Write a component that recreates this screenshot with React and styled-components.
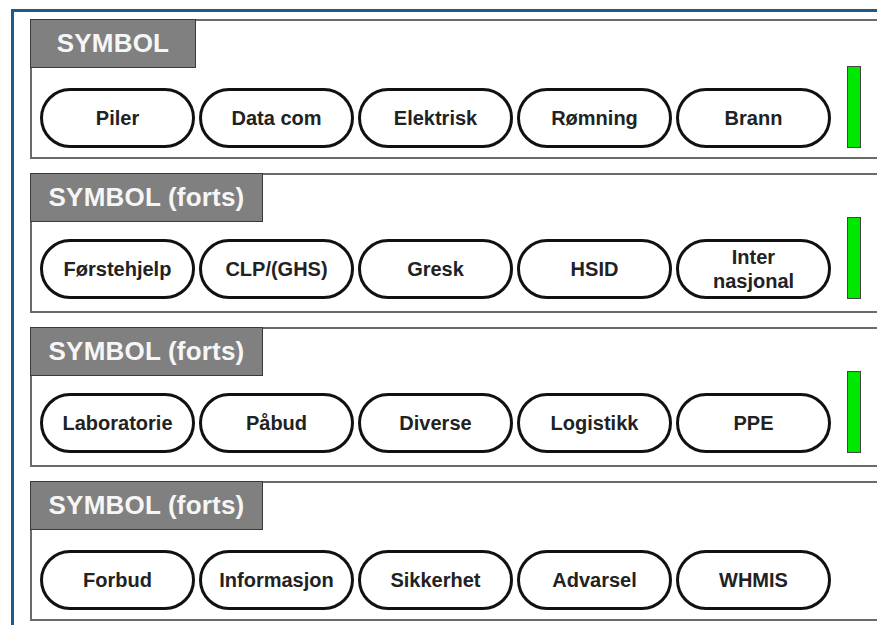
import React from "react";
import styled, { createGlobalStyle } from "styled-components";

const Global = createGlobalStyle`
  html, body { margin: 0; padding: 0; background: #fff; overflow: hidden; }
  body { font-family: "Liberation Sans", Arial, sans-serif; }
`;

const Frame = styled.div`
  margin: 9px 0 0 11px;
  width: calc(100vw - 11px);
  height: calc(100vh - 9px);
  border-left: 3px solid #1e5a8a;
  border-top: 3px solid #1e5a8a;
  padding: 7px 0 0 16px;
  display: flex;
  flex-direction: column;
  gap: 14px;
  box-sizing: border-box;
  overflow: hidden;
`;

const Panel = styled.section`
  box-sizing: border-box;
  width: 100%;
  height: 140px;
  flex: none;
  border: 2px solid #6a6a6a;
  border-right: none;
  display: flex;
  flex-direction: column;
  align-items: flex-start;
`;

const Tab = styled.div`
  box-sizing: border-box;
  margin: -2px 0 0 -2px;
  width: ${(p) => p.$w}px;
  height: 49px;
  background: #808080;
  border: 1px solid #3a3a3a;
  color: #f6f6f6;
  font-weight: bold;
  font-size: 26px;
  display: flex;
  align-items: center;
  justify-content: center;
  letter-spacing: 0.2px;
`;

const Row = styled.div`
  margin: ${(p) => p.$top}px 0 0 8px;
  height: 60px;
  display: flex;
  gap: 4px;
`;

const Pill = styled.div`
  box-sizing: border-box;
  width: 155px;
  height: 60px;
  border: 3px solid #111;
  border-radius: 30px;
  display: flex;
  align-items: center;
  justify-content: center;
  text-align: center;
  font-weight: bold;
  font-size: 20px;
  line-height: 24px;
  color: #222;
`;

const Level = styled.div`
  box-sizing: border-box;
  align-self: flex-end;
  flex: none;
  width: 14px;
  height: 82px;
  margin-left: 12px;
  background: #00e800;
  border: 1.5px solid #444;
`;

const panels = [
  { title: "SYMBOL", w: 166, top: 20, items: ["Piler", "Data com", "Elektrisk", "Rømning", "Brann"], bar: true },
  { title: "SYMBOL (forts)", w: 233, top: 17, items: ["Førstehjelp", "CLP/(GHS)", "Gresk", "HSID", ["Inter", "nasjonal"]], bar: true },
  { title: "SYMBOL (forts)", w: 233, top: 17, items: ["Laboratorie", "Påbud", "Diverse", "Logistikk", "PPE"], bar: true },
  { title: "SYMBOL (forts)", w: 233, top: 20, items: ["Forbud", "Informasjon", "Sikkerhet", "Advarsel", "WHMIS"], bar: false },
];

export default function App() {
  return (
    <>
      <Global />
      <Frame>
        {panels.map((p, i) => (
          <Panel key={i}>
            <Tab $w={p.w}>{p.title}</Tab>
            <Row $top={p.top}>
              {p.items.map((it, j) => (
                <Pill key={j}>
                  {Array.isArray(it) ? (
                    <span>
                      {it[0]}
                      <br />
                      {it[1]}
                    </span>
                  ) : (
                    it
                  )}
                </Pill>
              ))}
              {p.bar && <Level />}
            </Row>
          </Panel>
        ))}
      </Frame>
    </>
  );
}
